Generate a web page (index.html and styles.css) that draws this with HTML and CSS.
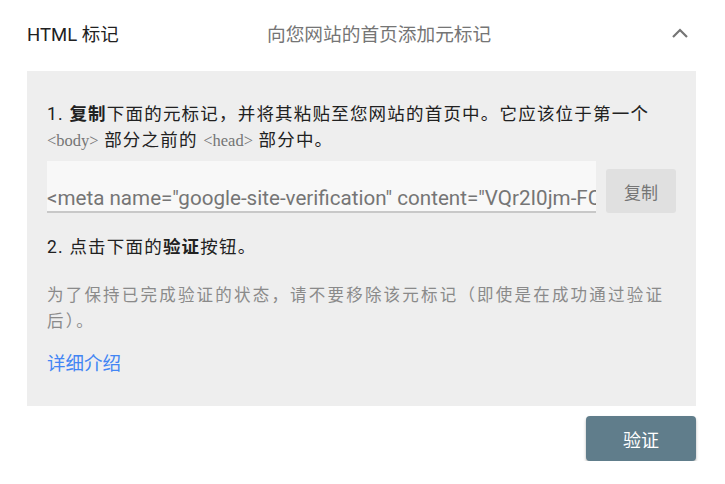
FILE: index.html
```html
<!DOCTYPE html>
<html lang="zh-CN">
<head>
<meta charset="utf-8">
<title>HTML 标记</title>
<link rel="stylesheet" href="styles.css">
</head>
<body>
<div class="card">
  <div class="header">
    <div class="title">HTML 标记</div>
    <div class="subtitle">向您网站的首页添加元标记</div>
    <svg class="chevron" width="18" height="12" viewBox="0 0 18 12"><path d="M2 10 L9 3 L16 10" fill="none" stroke="#757575" stroke-width="2.2"/></svg>
  </div>
  <div class="panel">
    <p class="step">1. <b>复制</b>下面的元标记，并将其粘贴至您网站的首页中。它应该位于第一个 <code>&lt;body&gt;</code> 部分之前的 <code>&lt;head&gt;</code> 部分中。</p>
    <div class="copy-row">
      <div class="meta-box"><span class="meta-text">&lt;meta name="google-site-verification" content="VQr2I0jm-FC4xT8dAe7sLkPqW9Zu" /&gt;</span></div>
      <button class="copy-btn">复制</button>
    </div>
    <p class="step step2">2. 点击下面的<b>验证</b>按钮。</p>
    <p class="note">为了保持已完成验证的状态，请不要移除该元标记（即使是在成功通过验证后）。</p>
    <a class="learn" href="#">详细介绍</a>
  </div>
  <div class="actions">
    <button class="verify-btn">验证</button>
  </div>
</div>
</body>
</html>
```
FILE: styles.css
```css
html, body {
  margin: 0;
  padding: 0;
  background: #ffffff;
}
body {
  font-family: "Roboto", "Noto Sans CJK SC", sans-serif;
  color: #212121;
}
.card {
  width: 669px;
  margin-left: 27px;
}
.header {
  height: 71px;
  display: flex;
  align-items: center;
}
.title {
  font-size: 18.5px;
  width: 240px;
  color: #212121;
  padding-bottom: 6px;
}
.subtitle {
  font-size: 18.7px;
  color: #757575;
  flex: 1;
  padding-bottom: 6px;
}
.chevron {
  margin-right: 7px;
  margin-bottom: 6px;
}
.panel {
  background: #eeeeee;
  padding: 30px 20px 28px 20px;
  height: 335px;
  box-sizing: border-box;
}
.step {
  margin: 0;
  font-size: 17.5px;
  letter-spacing: 1.2px;
  line-height: 26px;
  color: #212121;
}
.step b {
  font-weight: 700;
}
code {
  font-family: "Liberation Serif", serif;
  font-size: 16.5px;
  color: #757575;
  letter-spacing: 0;
}
.copy-row {
  display: flex;
  align-items: flex-start;
  margin-top: 7px;
}
.meta-box {
  width: 549px;
  height: 52px;
  background: #f8f8f8;
  border-bottom: 2px solid #c8c8c8;
  box-sizing: border-box;
  overflow: hidden;
  display: flex;
  align-items: flex-end;
  padding-bottom: 1px;
}
.meta-text {
  display: block;
  width: 100%;
  overflow: hidden;
  white-space: nowrap;
  font-size: 20.6px;
  color: #757575;
}
.copy-btn {
  margin-left: 10px;
  margin-top: 8px;
  width: 70px;
  height: 44px;
  border: none;
  border-radius: 3px;
  background: #e0e0e0;
  color: #757575;
  font-family: inherit;
  font-size: 17px;
}
.step2 {
  margin-top: 21px;
}
.note {
  margin: 23px 0 0 0;
  font-size: 16.5px;
  letter-spacing: 2.2px;
  line-height: 26px;
  color: #8a8a8a;
}
.learn {
  display: inline-block;
  margin-top: 14px;
  font-size: 18.5px;
  color: #4285f4;
  text-decoration: none;
}
.actions {
  display: flex;
  justify-content: flex-end;
  padding-top: 10px;
}
.verify-btn {
  width: 110px;
  height: 45px;
  background: #607d8b;
  color: #ffffff;
  border: none;
  border-radius: 4px;
  font-family: inherit;
  font-size: 18px;
  box-shadow: 0 2px 3px rgba(0,0,0,0.3);
}
```
